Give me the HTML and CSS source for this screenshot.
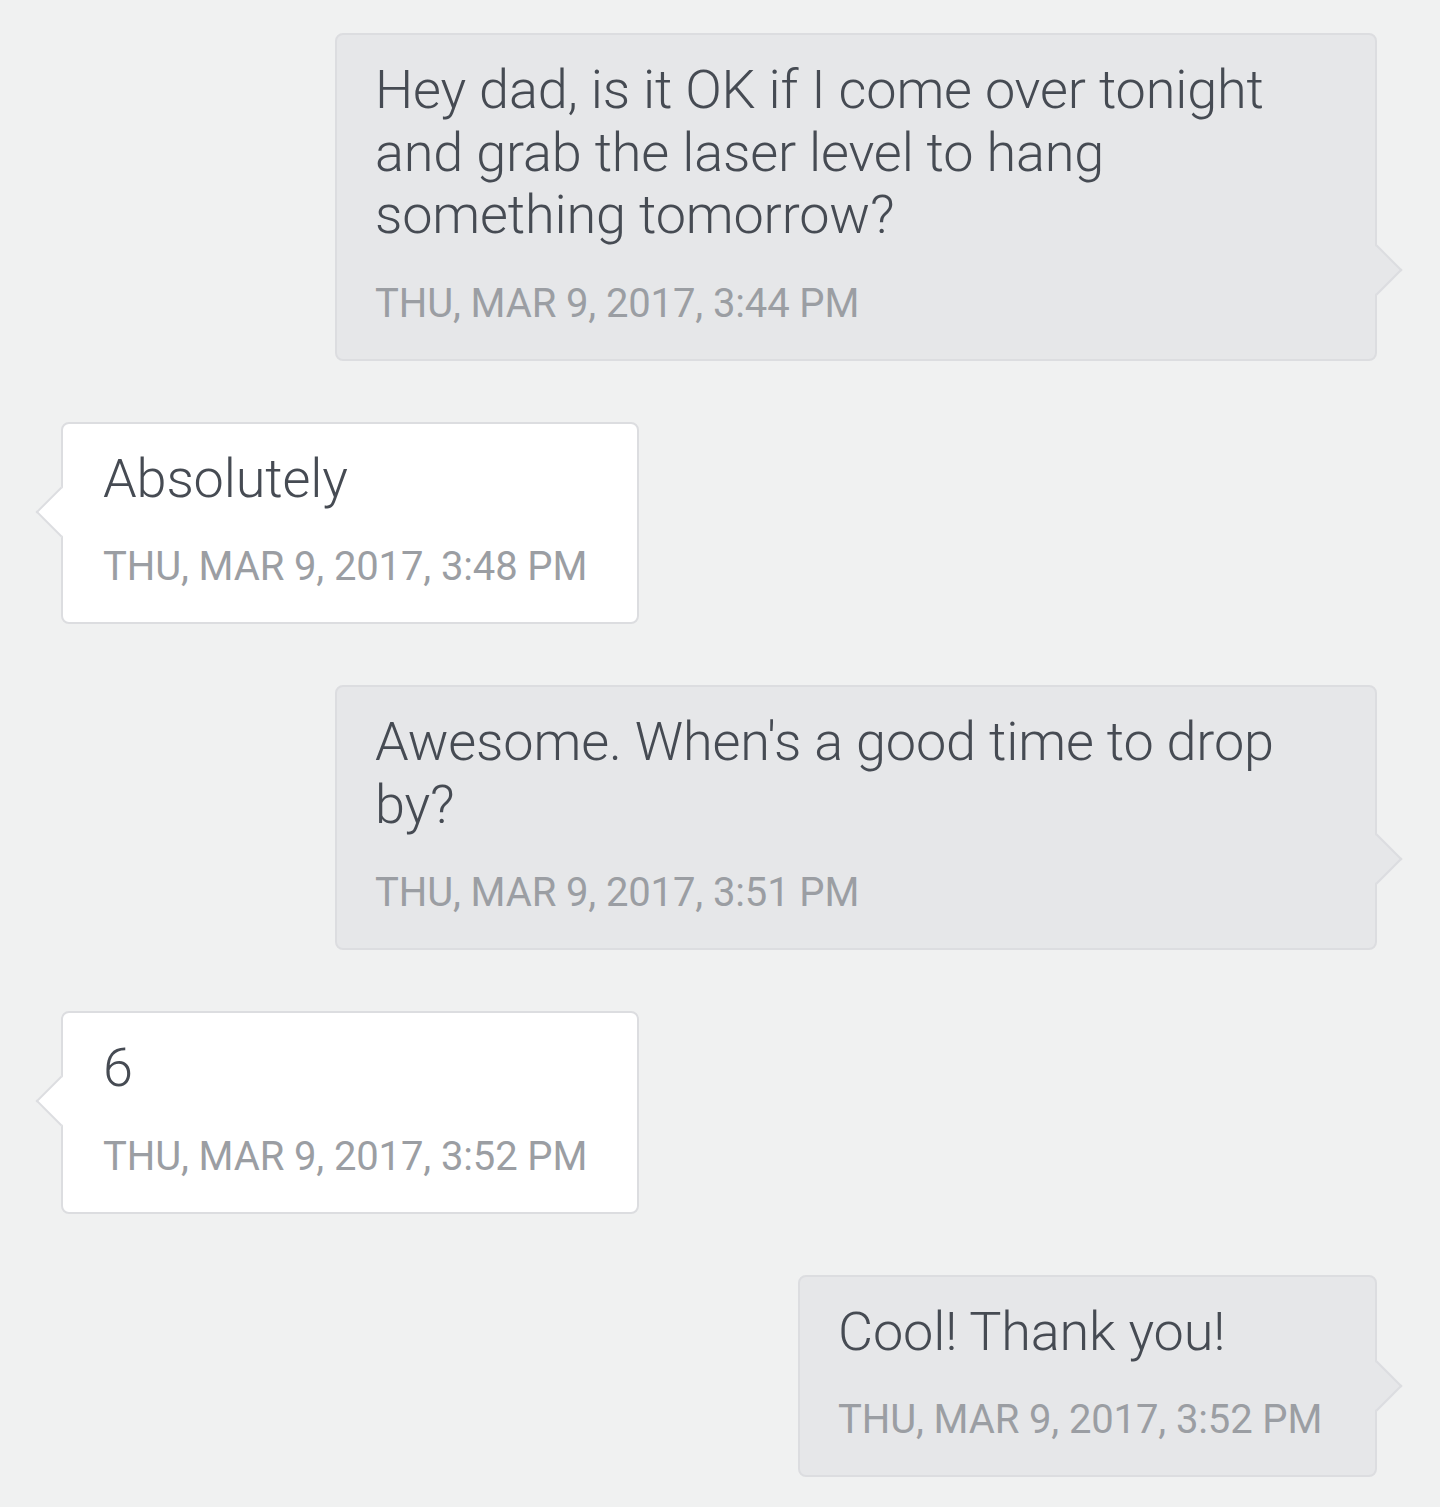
FILE: index.html
```html
<!DOCTYPE html>
<html lang="en">
<head>
<meta charset="utf-8">
<title>Messages</title>
<link rel="stylesheet" href="styles.css">
</head>
<body>
<main class="thread">
  <div class="msg msg-out">
    <p class="msg-text">Hey dad, is it OK if I come over tonight and grab the laser level to hang something tomorrow?</p>
    <p class="msg-time">Thu, Mar 9, 2017, 3:44 PM</p>
  </div>
  <div class="msg msg-in">
    <p class="msg-text">Absolutely</p>
    <p class="msg-time">Thu, Mar 9, 2017, 3:48 PM</p>
  </div>
  <div class="msg msg-out">
    <p class="msg-text">Awesome. When's a good time to drop by?</p>
    <p class="msg-time">Thu, Mar 9, 2017, 3:51 PM</p>
  </div>
  <div class="msg msg-in">
    <p class="msg-text">6</p>
    <p class="msg-time">Thu, Mar 9, 2017, 3:52 PM</p>
  </div>
  <div class="msg msg-out msg-short">
    <p class="msg-text">Cool! Thank you!</p>
    <p class="msg-time">Thu, Mar 9, 2017, 3:52 PM</p>
  </div>
</main>
</body>
</html>
```

FILE: styles.css
```css
html, body {
  margin: 0;
  padding: 0;
  background: #f0f1f1;
}

body {
  font-family: Roboto, "Liberation Sans", sans-serif;
  color: #464b53;
}

.thread {
  display: flex;
  flex-direction: column;
  gap: 61px;
  padding: 33px 63px 40px 61px;
}

.msg {
  position: relative;
  box-sizing: border-box;
  border: 2px solid #dcdde0;
  border-radius: 8px;
  padding: 24px 40px 31px 38px;
}

.msg-out {
  align-self: flex-end;
  width: 1042px;
  background: #e6e7e9;
}

.msg-out.msg-short {
  width: 579px;
}

.msg-in {
  align-self: flex-start;
  width: 578px;
  background: #ffffff;
  padding-left: 40px;
}

.msg::after {
  content: "";
  position: absolute;
  box-sizing: border-box;
  width: 36px;
  height: 36px;
  transform: rotate(45deg);
}

.msg-out::after {
  right: -20px;
  bottom: 71px;
  background: #e6e7e9;
  border-top: 2px solid #dcdde0;
  border-right: 2px solid #dcdde0;
}

.msg-in::after {
  left: -20px;
  top: 70px;
  background: #ffffff;
  border-bottom: 2px solid #dcdde0;
  border-left: 2px solid #dcdde0;
}

.msg-text {
  margin: 0;
  font-size: 54px;
  font-weight: 300;
  line-height: 62.5px;
  letter-spacing: -0.15px;
}

.msg-time {
  margin: 33px 0 0;
  font-size: 40px;
  font-weight: 400;
  line-height: 48px;
  letter-spacing: -0.12px;
  text-transform: uppercase;
  color: #9b9ea3;
}
```
